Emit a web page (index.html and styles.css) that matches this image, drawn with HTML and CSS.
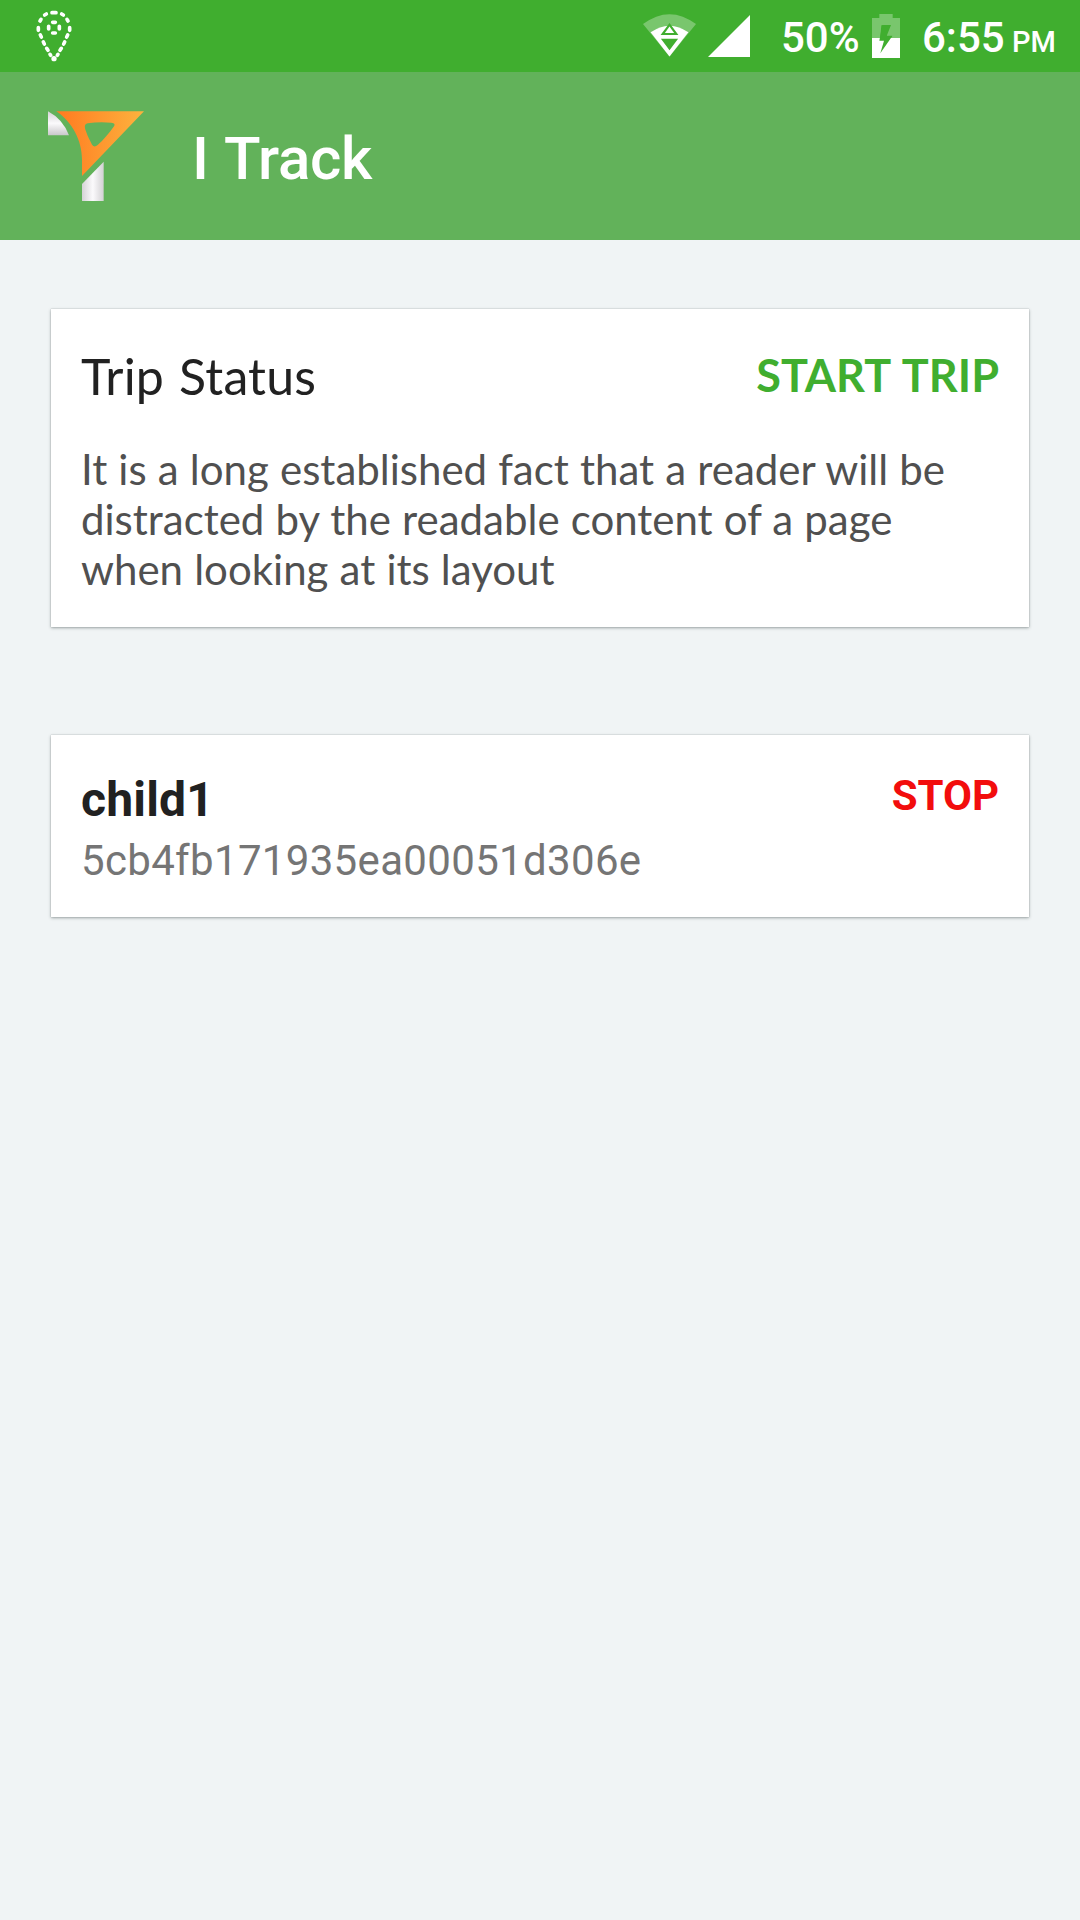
FILE: index.html
```html
<!DOCTYPE html>
<html lang="en">
<head>
<meta charset="utf-8">
<title>I Track</title>
<link rel="stylesheet" href="styles.css">
</head>
<body>
<div class="status-bar">
  <svg class="pin" viewBox="0 0 108 156" fill="none" stroke="#fff" stroke-width="11" stroke-linecap="round">
    <path d="M48 8h12M26 15l5-3M77 12l5 3M12 33l3-5M93 28l3 5M7 53v8M101 53v8M13 75l3 6M95 75l-3 6M22 96l3 6M86 96l-3 6M32 115l4 6M76 115l-4 6M42 133l2 3M66 133l-2 3"/>
    <path d="M50 37h8M50 69h8M38 49v8M70 49v8"/>
    <circle cx="54" cy="146" r="8" fill="#fff" stroke="none"/>
  </svg>
  <div class="status-right">
    <svg class="wifi" viewBox="0 0 160 132">
      <path d="M0 30Q80-30 160 30L80 128Z" fill="#fff" fill-opacity=".3"/>
      <path d="M23 55Q80 15 137 55L80 128Z" fill="#fff"/>
      <path d="M80 27L107 63H53ZM54 74H106L80 109Z" fill="#40ae2f"/>
      <path d="M80 37L94 57H66Z" fill="#fff"/>
    </svg>
    <svg class="signal" viewBox="0 0 42 42"><path d="M42 0V42H0Z" fill="#fff"/></svg>
    <span class="percent">50%</span>
    <svg class="battery" viewBox="0 0 84 132">
      <path d="M22 0H62V12H84V72H57L61 65H44V34H28L24 79H40L39 72H0V12H22Z" fill="#fff" fill-opacity=".3"/>
      <path d="M0 72H84V132H0Z" fill="#fff"/>
      <path d="M31 33H57L44 66H61L25 118L36 80H22Z" fill="#40ae2f"/>
    </svg>
    <span class="clock">6:55</span><span class="meridiem">PM</span>
  </div>
</div>
<header class="app-bar">
  <svg class="logo" viewBox="0 0 288 270">
    <defs>
      <linearGradient id="orange"><stop offset="0" stop-color="#ff7a20"/><stop offset="1" stop-color="#fdb33e"/></linearGradient>
      <linearGradient id="stem"><stop offset="0" stop-color="#d5d3d6"/><stop offset=".5" stop-color="#fbfafc"/><stop offset="1" stop-color="#d3d1d4"/></linearGradient>
      <linearGradient id="wing" x2="0" y2="1"><stop offset="0" stop-color="#d5d3d6"/><stop offset=".5" stop-color="#fbfafc"/><stop offset="1" stop-color="#c9c7ca"/></linearGradient>
    </defs>
    <path d="M0 1Q44 24 63 73H0Z" fill="url(#wing)"/>
    <path d="M25 1H288L102 195V145C102 88 72 32 25 1ZM119 37C106 39 111 53 115 64C119 77 127 91 132 101Q139 111 149 102C166 87 184 65 197 47Q205 36 190 35Q154 31 119 37Z" fill="url(#orange)" fill-rule="evenodd"/>
    <path d="M102 219L167 152V270H102Z" fill="url(#stem)"/>
  </svg>
  <h1 class="app-title">I Track</h1>
</header>
<main class="content">
  <section class="card trip">
    <div class="trip-head">
      <h2 class="trip-title">Trip Status</h2>
      <span class="start">START TRIP</span>
    </div>
    <p class="trip-text">It is a long established fact that a reader will be distracted by the readable content of a page when looking at its layout</p>
  </section>
  <section class="card child">
    <div>
      <h2 class="child-name">child1</h2>
      <p class="child-id">5cb4fb171935ea00051d306e</p>
    </div>
    <span class="stop">STOP</span>
  </section>
</main>
</body>
</html>
```
FILE: styles.css
```css
* { box-sizing: border-box; margin: 0; padding: 0; }
body { min-height: 1920px; background: #f0f4f5; font-family: Roboto, sans-serif; }
svg { display: block; flex: none; }

.status-bar { height: 72px; padding: 0 24px 0 36px; background: #40ae2f; color: #fff; display: flex; justify-content: space-between; }
.pin { width: 36px; height: 52px; margin-top: 10px; }
.status-right { display: flex; font-size: 42px; font-weight: 500; line-height: 72px; padding-top: 2px; white-space: nowrap; }
.wifi { width: 53px; height: 44px; margin: 12px 12px 0 0; }
.signal { width: 42px; height: 42px; margin: 13px 31px 0 0; }
.percent { width: 91px; }
.battery { width: 28px; height: 44px; margin-top: 12px; }
.clock { width: 90px; margin-left: 22px; }
.meridiem { width: 44px; font-size: 29px; line-height: 80px; height: 70px; }

.app-bar { height: 168px; padding-left: 48px; background: #62b25a; color: #fff; display: flex; }
.logo { width: 96px; height: 90px; margin-top: 39px; }
.app-title { margin-left: 48px; padding-top: 3px; font-size: 60px; font-weight: 500; line-height: 168px; letter-spacing: -.3px; word-spacing: 2px; }

.content { padding: 69px 51px 0; display: flex; flex-direction: column; gap: 108px; }
.card { background: #fff; box-shadow: 0 1px 3px rgba(0, 20, 20, .34), 0 0 1px rgba(0, 20, 20, .25); }
.trip { height: 318px; padding: 38px 30px 0; font-family: Lato, sans-serif; }
.trip-head { display: flex; justify-content: space-between; height: 58px; }
.trip-title { color: #212121; font-size: 50px; font-weight: 400; line-height: 58px; letter-spacing: .2px; word-spacing: 2px; }
.start { color: #40ae2f; font-size: 45px; font-weight: 700; line-height: 56px; word-spacing: 2.5px; }
.trip-text { margin-top: 39px; color: #505050; font-size: 42px; line-height: 50px; word-spacing: .4px; }
.child { height: 182px; padding: 36px 30px 0; display: flex; justify-content: space-between; }
.child-name { color: #212121; font-size: 48px; font-weight: 700; line-height: 57px; letter-spacing: .2px; }
.child-id { margin-top: 8px; color: #757575; font-size: 42px; line-height: 50px; letter-spacing: .33px; }
.stop { color: #f20d0d; font-size: 42px; font-weight: 700; line-height: 49px; }
```
